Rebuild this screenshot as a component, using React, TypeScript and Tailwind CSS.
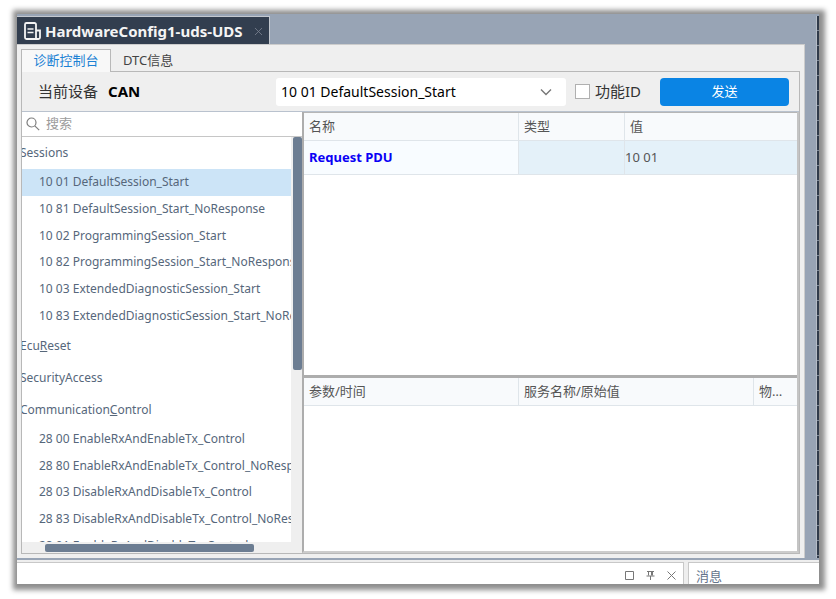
import { X } from "lucide-react";

type Entry = { code: string; name: string };

const sessions: Entry[] = [
  { code: "10 01", name: "DefaultSession_Start" },
  { code: "10 81", name: "DefaultSession_Start_NoResponse" },
  { code: "10 02", name: "ProgrammingSession_Start" },
  { code: "10 82", name: "ProgrammingSession_Start_NoResponse" },
  { code: "10 03", name: "ExtendedDiagnosticSession_Start" },
  { code: "10 83", name: "ExtendedDiagnosticSession_Start_NoResponse" },
];

const communication: Entry[] = [
  { code: "28 00", name: "EnableRxAndEnableTx_Control" },
  { code: "28 80", name: "EnableRxAndEnableTx_Control_NoResponse" },
  { code: "28 03", name: "DisableRxAndDisableTx_Control" },
  { code: "28 83", name: "DisableRxAndDisableTx_Control_NoResponse" },
  { code: "28 01", name: "EnableRxAndDisableTx_Control" },
];

function Group({ items, selected, height }: { items: Entry[]; selected?: string; height: string }) {
  return (
    <ul className={`mb-px flex shrink-0 flex-col ${height}`}>
      {items.map((item) => (
        <li
          key={item.code}
          className={`flex flex-1 items-center pl-[17px] whitespace-pre ${item.code === selected ? "bg-[#cce4f7]" : ""}`}
        >
          {item.code} {item.name}
        </li>
      ))}
    </ul>
  );
}

function Heading({ children }: { children: React.ReactNode }) {
  return <h3 className="-ml-0.5 flex h-8 shrink-0 items-center whitespace-pre">{children}</h3>;
}

function DocumentTab() {
  return (
    <div className="flex h-[31px] shrink-0 items-end">
      <div className="flex h-[29px] w-[253px] items-center border-t border-r border-[#c3c8cf] bg-[#323e4f] pl-1.5">
        <svg width="19" height="20" viewBox="0 0 19 20" fill="none" stroke="#f4f4f4" strokeWidth="1.8">
          <path d="M13 18V3.500a1.500 1.500 0 0 0-1.500-1.500H3.500a1.500 1.500 0 0 0-1.500 1.500v13a1.500 1.500 0 0 0 1.500 1.500h12a1.500 1.500 0 0 0 1.500-1.500V9.500h-4" />
          <path d="M4.500 8h6M4.500 11.500h6" strokeWidth="1.500" />
        </svg>
        <span className="pl-[3px] text-[15px] font-bold whitespace-nowrap text-[#f4f4f4]">HardwareConfig1-uds-UDS</span>
        <button aria-label="关闭" className="mr-1 ml-auto text-[#7c8491]">
          <X size={13} strokeWidth={1.5} />
        </button>
      </div>
    </div>
  );
}

function Toolbar() {
  return (
    <div className="flex h-10 shrink-0 items-center border-b border-[#b9c2ce] pr-[10px] pl-4 text-[15px] text-[#333333]">
      <span>当前设备</span>
      <b className="pl-[10px] text-black">CAN</b>
      <div className="relative ml-auto w-[290px]">
        <select
          aria-label="服务"
          className="h-7 w-full appearance-none rounded-[3px] bg-white pl-[5px] text-sm text-black"
        >
          <option>10 01 DefaultSession_Start</option>
        </select>
        <svg
          width="12"
          height="8"
          viewBox="0 0 12 8"
          fill="none"
          stroke="#777777"
          strokeWidth="1.4"
          className="pointer-events-none absolute top-[10px] right-[14px]"
        >
          <path d="M1 1.500l5 5 5-5" />
        </svg>
      </div>
      <label className="ml-[9px] flex w-[85px] items-center gap-[5px] whitespace-nowrap">
        <input type="checkbox" className="size-[15px] shrink-0 appearance-none border border-[#b0b0b0] bg-white" />
        功能ID
      </label>
      <button className="h-7 w-[129px] rounded bg-[#0a84e4] text-[13px] text-white">发送</button>
    </div>
  );
}

function ServiceTree() {
  return (
    <section className="flex w-[280px] shrink-0 flex-col">
      <div className="flex h-[25px] shrink-0 items-center gap-[6px] border-b border-[#c6c6c6] bg-white pl-1">
        <svg width="14" height="14" viewBox="0 0 14 14" fill="none" stroke="#7d7d7d" strokeWidth="1.200" className="shrink-0">
          <circle cx="5.500" cy="5.500" r="4.500" />
          <path d="M8.800 8.800l4.400 4.400" />
        </svg>
        <input aria-label="搜索" placeholder="搜索" className="w-full bg-transparent text-[13px] outline-none placeholder:text-[#9c9c9c]" />
      </div>
      <div className="flex min-h-0 flex-1">
        <div className="flex min-w-0 flex-1 flex-col overflow-hidden bg-white text-xs text-[#56677b]">
          <Heading>Sessions</Heading>
          <Group items={sessions} selected="10 01" height="h-[160px]" />
          <Heading>Ecu<u>R</u>eset</Heading>
          <Heading>SecurityAccess</Heading>
          <Heading>Communication<u>C</u>ontrol</Heading>
          <Group items={communication} height="h-[133px]" />
        </div>
        <div className="flex w-[11px] shrink-0 justify-end">
          <div className="h-[233px] w-[9px] rounded-[2px] bg-[#6c7d92]" />
        </div>
      </div>
      <div className="flex h-[11px] shrink-0 items-center">
        <div className="ml-[23px] h-2 w-[209px] rounded-[2px] bg-[#6c7d92]" />
      </div>
    </section>
  );
}

const th = "h-7 border-r border-b border-[#dfe5ea] bg-[#f8fafc] px-[5px] text-left font-normal last:border-r-0";

function ResultTables() {
  return (
    <section className="flex min-w-0 flex-1 flex-col border-r-2 border-b-2 border-l-2 border-r-[#c4c4c4] border-b-[#cccccc] border-l-[#adadad] text-[13px] text-[#555555]">
      <div className="h-[263px] shrink-0 border-t border-[#b6b6b6] bg-white">
        <table className="w-full table-fixed border-separate border-spacing-0">
          <colgroup>
            <col className="w-[215px]" />
            <col className="w-[106px]" />
            <col />
          </colgroup>
          <thead>
            <tr>
              <th className={th}>名称</th>
              <th className={th}>类型</th>
              <th className={th}>值</th>
            </tr>
          </thead>
          <tbody>
            <tr>
              <td className="h-[34px] border-r border-b border-[#dfe5ea] bg-[#f8fcff] px-[5px] font-bold text-[#0a00f5]">Request PDU</td>
              <td className="border-r border-b border-[#dfe5ea] bg-[#e4f1f9]" />
              <td className="border-b border-[#dfe5ea] bg-[#e4f1f9]">10 01</td>
            </tr>
          </tbody>
        </table>
      </div>
      <div className="h-[3px] shrink-0 bg-[#adadad]" />
      <div className="min-h-0 flex-1 bg-white">
        <table className="w-full table-fixed border-separate border-spacing-0">
          <colgroup>
            <col className="w-[215px]" />
            <col />
            <col className="w-[43px]" />
          </colgroup>
          <thead>
            <tr>
              <th className={th}>参数/时间</th>
              <th className={th}>服务名称/原始值</th>
              <th className={`${th} truncate`}>物理值</th>
            </tr>
          </thead>
        </table>
      </div>
    </section>
  );
}

function DockBar() {
  return (
    <footer className="flex h-6 shrink-0 gap-1 bg-[#eeeeee] pt-[2px]">
      <div className="flex flex-1 items-center justify-end gap-2 border-t border-r border-[#c8c8c8] bg-white pt-1 pr-[5px] text-[#777777]">
        <button aria-label="最大化">
          <svg width="13" height="13" viewBox="0 0 13 13" fill="none" stroke="currentColor">
            <path d="M2.500 2.500h8v8h-8z" />
          </svg>
        </button>
        <button aria-label="固定">
          <svg width="13" height="13" viewBox="0 0 13 13" fill="none" stroke="currentColor">
            <path d="M3 2.500h7M4.500 2.500v4M8.500 2.500v4M7.500 2.500v4M2.500 7h8M6.500 7v4" />
          </svg>
        </button>
        <button aria-label="关闭">
          <svg width="13" height="13" viewBox="0 0 13 13" fill="none" stroke="currentColor">
            <path d="M2.500 2.500l8 8M10.500 2.500l-8 8" />
          </svg>
        </button>
      </div>
      <div className="flex w-[131px] items-center border-t border-l border-[#c8c8c8] bg-white pt-1 pl-[7px] text-[13px] leading-4 text-[#64748b]">消息</div>
    </footer>
  );
}

export default function App() {
  return (
    <div className="flex h-screen bg-white pt-[14px] pr-[17px] pb-[15px] pl-[17px] font-['Noto_Sans','Noto_Sans_CJK_SC',sans-serif]">
      <div className="flex min-w-0 flex-1 flex-col bg-[#98a4b5] shadow-[1px_1px_5px_5px_#8f8f8f]">
        <div className="flex min-h-0 flex-1">
          <div className="flex min-w-0 flex-1 flex-col">
            <DocumentTab />
            <main className="-mt-px flex min-h-0 flex-1 flex-col border-t border-r border-[#cccccc] bg-[#efefef] pt-1 pr-1 pb-1 pl-1">
              <nav className="flex h-[22px] shrink-0 text-[13px]">
                <button className="z-10 -mb-px w-[90px] border-t border-r border-l border-[#b8b8b8] bg-[#f8f8f8] text-[#1c82d4]">诊断控制台</button>
                <button className="px-3 pt-0.5 text-[#444444]">DTC信息</button>
              </nav>
              <div className="flex min-h-0 flex-1 flex-col border border-[#b8b8b8]">
                <Toolbar />
                <div className="flex min-h-0 flex-1">
                  <ServiceTree />
                  <ResultTables />
                </div>
              </div>
            </main>
          </div>
          <div className="w-[11px] shrink-0" />
          <div className="mt-0.5 w-[3px] shrink-0 border-l border-[#b5bcc6] bg-[#303b4b] bg-[repeating-linear-gradient(180deg,transparent_0px,transparent_14px,#7b8797_14px,#7b8797_15px)]" />
        </div>
        <div className="h-0.5 shrink-0" />
        <DockBar />
      </div>
    </div>
  );
}
